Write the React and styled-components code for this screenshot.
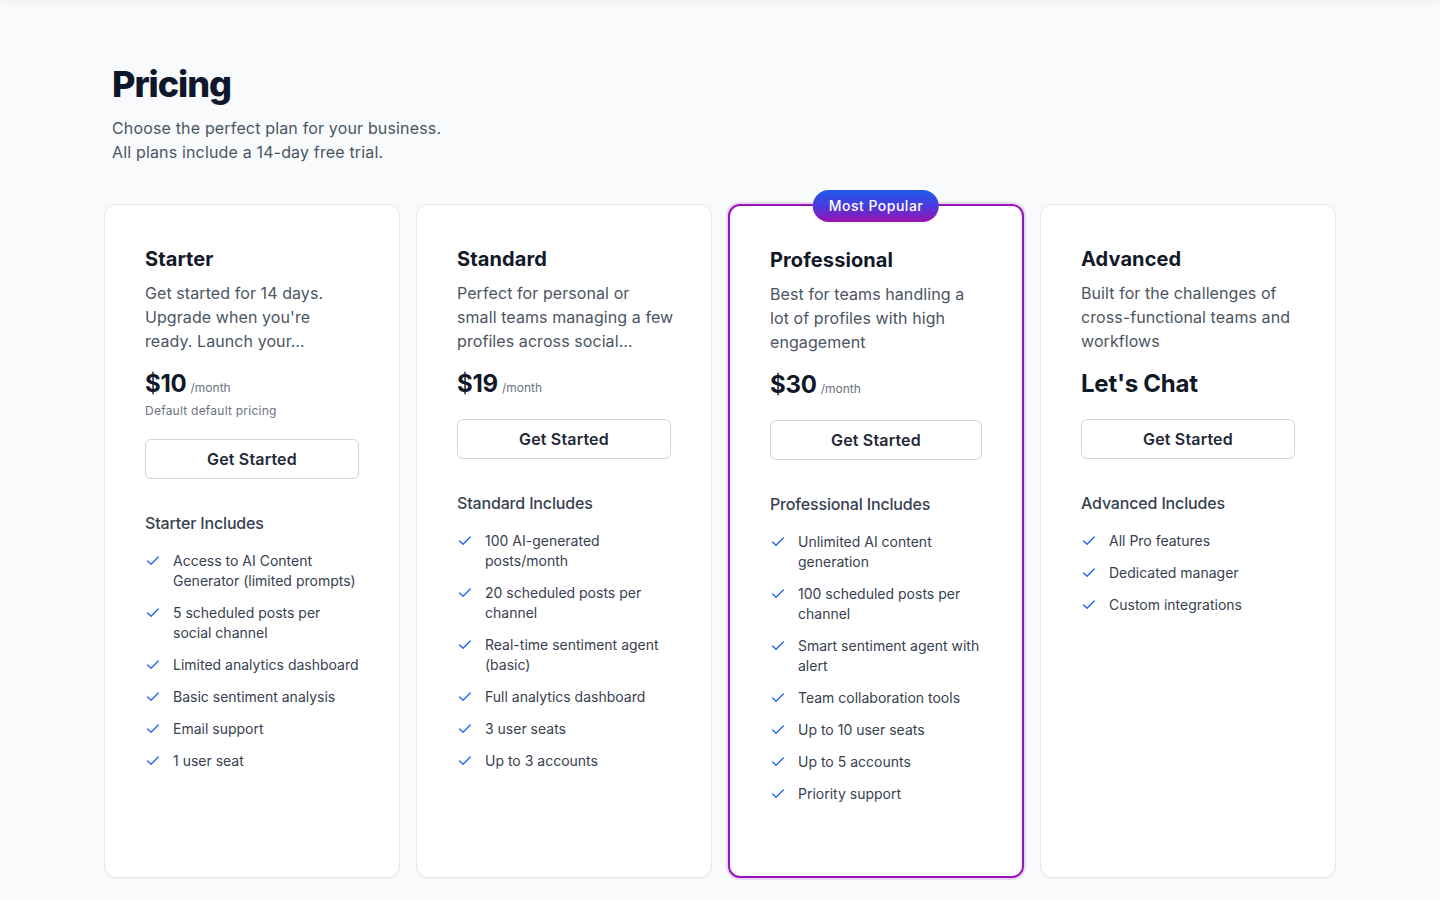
import React from "react";
import styled, { createGlobalStyle } from "styled-components";
import { Check } from "lucide-react";

const GlobalStyle = createGlobalStyle`
  * { box-sizing: border-box; }
  html, body { margin: 0; padding: 0; }
  body {
    background: #f8fafc;
    font-family: Inter, "Noto Sans", "Liberation Sans", sans-serif;
    color: #111827;
    -webkit-font-smoothing: antialiased;
  }
`;

const TopShade = styled.div`
  height: 0;
  box-shadow: 0 0 6px 2px rgba(15, 23, 42, 0.06);
`;

const Page = styled.main`
  width: 1232px;
  margin: 0 auto;
  padding: 64px 0 24px;
`;

const Intro = styled.header`
  padding: 0 8px;
  margin-bottom: 40px;
`;

const Title = styled.h1`
  margin: 0 0 12px;
  font-size: 36px;
  line-height: 40px;
  font-weight: 800;
  letter-spacing: -0.03em;
  color: #0f172a;
`;

const Lead = styled.p`
  margin: 0;
  font-size: 16px;
  line-height: 24px;
  letter-spacing: 0.01em;
  color: #4b5563;
`;

const Grid = styled.div`
  display: grid;
  grid-template-columns: repeat(4, minmax(0, 1fr));
  gap: 16px;
  align-items: stretch;
`;

const Card = styled.article`
  position: relative;
  min-width: 0;
  display: flex;
  flex-direction: column;
  background: #ffffff;
  border-radius: 12px;
  padding: 42px 40px 72px;
  border: ${(p) => (p.$featured ? "2px solid #9718b6" : "1px solid #e5e7eb")};
  box-shadow: ${(p) =>
    p.$featured
      ? "0 0 0 2px rgba(205, 150, 230, 0.35)"
      : "0 1px 2px rgba(15, 23, 42, 0.03)"};
`;

const Badge = styled.span`
  position: absolute;
  top: 0;
  left: 50%;
  transform: translate(-50%, -50%);
  padding: 6px 16px;
  border-radius: 999px;
  background: linear-gradient(180deg, #1d5ce8 0%, #4a3ade 50%, #9a12b0 100%);
  color: #ffffff;
  font-size: 14px;
  line-height: 20px;
  font-weight: 500;
  white-space: nowrap;
  letter-spacing: 0.035em;
`;

const PlanName = styled.h2`
  margin: 0;
  font-size: 20px;
  line-height: 25px;
  font-weight: 700;
  color: #111827;
  letter-spacing: 0.005em;
`;

const Description = styled.p`
  margin: 9px 0 0;
  font-size: 16px;
  line-height: 24px;
  letter-spacing: 0.005em;
  color: #4b5563;
  white-space: nowrap;
`;

const PriceRow = styled.div`
  margin-top: 15px;
  height: 31px;
  display: flex;
  align-items: baseline;
  gap: 4px;
  line-height: 32px;
`;

const Amount = styled.span`
  font-size: 24px;
  font-weight: 700;
  color: #111827;
  letter-spacing: -0.01em;
`;

const Period = styled.span`
  font-size: 12px;
  line-height: 16px;
  color: #6b7280;
`;

const PriceNote = styled.div`
  margin-top: 4px;
  font-size: 12px;
  line-height: 16px;
  letter-spacing: 0.02em;
  color: #6b7280;
`;

const ActionButton = styled.button`
  margin-top: 20px;
  width: 100%;
  height: 40px;
  border: 1px solid #d1d5db;
  border-radius: 6px;
  background: #ffffff;
  font-family: inherit;
  font-size: 16px;
  font-weight: 600;
  color: #1f2937;
  letter-spacing: 0.01em;
  cursor: pointer;
`;

const IncludesTitle = styled.h3`
  margin: 32px 0 0;
  font-size: 16px;
  line-height: 24px;
  font-weight: 500;
  letter-spacing: -0.01em;
  color: #374151;
`;

const FeatureList = styled.ul`
  list-style: none;
  margin: 16px 0 0;
  padding: 0;
  display: flex;
  flex-direction: column;
  gap: 12px;
`;

const FeatureItem = styled.li`
  display: flex;
  align-items: flex-start;
  gap: 12px;
  font-size: 14px;
  line-height: 20px;
  color: #374151;

  svg {
    flex: none;
    margin-top: 2px;
    color: #2563eb;
  }
`;

const plans = [
  {
    name: "Starter",
    description: [
      "Get started for 14 days.",
      "Upgrade when you're",
      "ready. Launch your…",
    ],
    price: "$10",
    note: "Default default pricing",
    features: [
      "Access to AI Content Generator (limited prompts)",
      "5 scheduled posts per social channel",
      "Limited analytics dashboard",
      "Basic sentiment analysis",
      "Email support",
      "1 user seat",
    ],
  },
  {
    name: "Standard",
    description: [
      "Perfect for personal or",
      "small teams managing a few",
      "profiles across social…",
    ],
    price: "$19",
    features: [
      "100 AI-generated posts/month",
      "20 scheduled posts per channel",
      "Real-time sentiment agent (basic)",
      "Full analytics dashboard",
      "3 user seats",
      "Up to 3 accounts",
    ],
  },
  {
    name: "Professional",
    description: [
      "Best for teams handling a",
      "lot of profiles with high",
      "engagement",
    ],
    price: "$30",
    featured: true,
    features: [
      "Unlimited AI content generation",
      "100 scheduled posts per channel",
      "Smart sentiment agent with alert",
      "Team collaboration tools",
      "Up to 10 user seats",
      "Up to 5 accounts",
      "Priority support",
    ],
  },
  {
    name: "Advanced",
    description: [
      "Built for the challenges of",
      "cross-functional teams and",
      "workflows",
    ],
    custom: "Let's Chat",
    features: ["All Pro features", "Dedicated manager", "Custom integrations"],
  },
];

function PlanCard({ plan }) {
  return (
    <Card $featured={plan.featured}>
      {plan.featured && <Badge>Most Popular</Badge>}
      <PlanName>{plan.name}</PlanName>
      <Description>
        {plan.description.map((line, i) => (
          <React.Fragment key={line}>
            {i > 0 && <br />}
            {line}
          </React.Fragment>
        ))}
      </Description>
      <PriceRow>
        {plan.custom ? (
          <Amount>{plan.custom}</Amount>
        ) : (
          <>
            <Amount>{plan.price}</Amount>
            <Period>/month</Period>
          </>
        )}
      </PriceRow>
      {plan.note && <PriceNote>{plan.note}</PriceNote>}
      <ActionButton type="button">Get Started</ActionButton>
      <IncludesTitle>{plan.name} Includes</IncludesTitle>
      <FeatureList>
        {plan.features.map((f) => (
          <FeatureItem key={f}>
            <Check size={16} strokeWidth={2} />
            <span>{f}</span>
          </FeatureItem>
        ))}
      </FeatureList>
    </Card>
  );
}

export default function App() {
  return (
    <>
      <GlobalStyle />
      <TopShade />
      <Page>
        <Intro>
          <Title>Pricing</Title>
          <Lead>
            Choose the perfect plan for your business.
            <br />
            All plans include a 14-day free trial.
          </Lead>
        </Intro>
        <Grid>
          {plans.map((p) => (
            <PlanCard key={p.name} plan={p} />
          ))}
        </Grid>
      </Page>
    </>
  );
}
